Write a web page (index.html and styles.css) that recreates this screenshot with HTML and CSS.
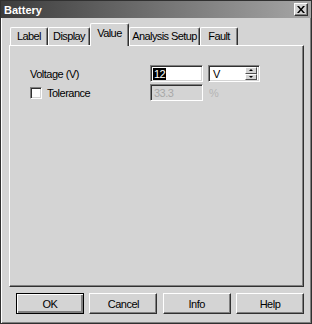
FILE: index.html
```html
<!DOCTYPE html>
<html lang="en">
<head>
  <meta charset="UTF-8" />
  <title>Battery</title>
  <link rel="stylesheet" href="styles.css">
</head>
<body>
  <div class="window">

    <!-- Title bar -->
    <div class="titlebar">
      <span class="title">Battery</span>
      <span class="close">
        <svg width="8" height="7" viewBox="0 0 8 7">
          <path d="M0 0h2l2 2.5l2-2.5h2l-3 3.5l3 3.5h-2l-2-2.5l-2 2.5h-2l3-3.5z" fill="#000"/>
        </svg>
      </span>
    </div>

    <div class="content">
      <!-- Tabs -->
      <div class="tabs">
        <div class="tab tab-label">Label</div>
        <div class="tab tab-display">Display</div>
        <div class="tab tab-value active">Value</div>
        <div class="tab tab-analysis">Analysis Setup</div>
        <div class="tab tab-fault">Fault</div>
      </div>

      <!-- Value page -->
      <div class="panel">
        <div class="row">
          <span class="label">Voltage (V)</span>
          <div class="field"><span class="selected">12</span></div>
          <div class="combo">
            <span class="combo-text">V</span>
            <div class="spin">
              <span class="spin-btn"><i class="arrow up"></i></span>
              <span class="spin-btn"><i class="arrow down"></i></span>
            </div>
          </div>
        </div>
        <div class="row">
          <label class="label check"><span class="box"></span>Tolerance</label>
          <div class="field disabled">33.3</div>
          <span class="unit">%</span>
        </div>
      </div>

      <!-- Buttons -->
      <div class="buttons">
        <div class="btn default">OK</div>
        <div class="btn">Cancel</div>
        <div class="btn">Info</div>
        <div class="btn">Help</div>
      </div>
    </div>

  </div>
</body>
</html>
```

FILE: styles.css
```css
* { margin: 0; padding: 0; box-sizing: border-box; }

body {
  background: #d4d4d4;
  font-family: 'Liberation Sans', Arial, sans-serif;
  font-size: 11px;
  letter-spacing: -0.5px;
  color: #000;
}

.window {
  width: 312px;
  height: 324px;
  background: #d4d4d4;
  border: 1px solid #303030;
  box-shadow: inset 1px 1px #ffffff, inset -1px -1px #808080;
}

/* title bar */
.titlebar {
  height: 17px;
  display: flex;
  align-items: center;
  justify-content: space-between;
  padding: 0 3px 0 3px;
  background: linear-gradient(to right, #3c3c3c, #a6a6a6);
}

.title {
  color: #fff;
  font-weight: bold;
  letter-spacing: 0;
}

.close {
  width: 14px;
  height: 13px;
  display: flex;
  align-items: center;
  justify-content: center;
  background: #d4d4d4;
  border: 1px solid;
  border-color: #fff #303030 #303030 #fff;
  box-shadow: inset -1px -1px #808080;
}

.content {
  padding: 0 7px 0 8px;
}

/* tabs */
.tabs {
  display: flex;
  height: 22px;
  margin-top: 5px;
  padding-left: 1px;
  position: relative;
  z-index: 1;
}

.tab {
  height: 18px;
  margin-top: 4px;
  padding-top: 2px;
  text-align: center;
  letter-spacing: -0.6px;
  border: 1px solid #fff;
  border-bottom: none;
  border-right: 1px solid #303030;
  border-radius: 2px 2px 0 0;
  box-shadow: inset -1px 0 #808080;
}

.tab-label { width: 38px; }
.tab-display { width: 42px; }
.tab-value { width: 39px; }
.tab-analysis { width: 71px; }
.tab-fault { width: 38px; }

.tab.active {
  height: 23px;
  margin-top: 0;
  padding-top: 3px;
  background: #d4d4d4;
}

/* page */
.panel {
  height: 242px;
  border: 1px solid;
  border-color: #fff #303030 #303030 #fff;
  box-shadow: inset -1px -1px #808080;
  padding: 19px 0 0 20px;
}

.row {
  display: flex;
  align-items: center;
  height: 17px;
  margin-bottom: 2px;
}

.label {
  width: 120px;
}

.check {
  display: flex;
  align-items: center;
}

.box {
  width: 12px;
  height: 12px;
  margin-right: 5px;
  background: #fff;
  border: 1px solid;
  border-color: #808080 #fff #fff #808080;
  box-shadow: inset 1px 1px #303030, inset -1px -1px #d4d4d4;
}

.field {
  width: 53px;
  height: 17px;
  padding: 2px 0 0 2px;
  background: #fff;
  border: 1px solid;
  border-color: #808080 #fff #fff #808080;
  box-shadow: inset 1px 1px #303030, inset -1px -1px #d4d4d4;
}

.field.disabled {
  background: #d4d4d4;
  color: #a8a8a8;
  padding-left: 3px;
}

.selected {
  display: inline-block;
  background: #000;
  color: #fff;
  line-height: 12px;
  padding: 0 1px;
}

.combo {
  width: 52px;
  height: 17px;
  margin-left: 5px;
  display: flex;
  align-items: center;
  justify-content: space-between;
  padding: 0 2px 0 4px;
  background: #fff;
  border: 1px solid;
  border-color: #808080 #fff #fff #808080;
  box-shadow: inset 1px 1px #303030, inset -1px -1px #d4d4d4;
}

.spin {
  display: flex;
  flex-direction: column;
  width: 12px;
  height: 13px;
}

.spin-btn {
  flex: 1;
  display: flex;
  align-items: center;
  justify-content: center;
  background: #d4d4d4;
  border: 1px solid;
  border-color: #fff #505050 #505050 #fff;
}

.arrow {
  width: 0;
  height: 0;
  border-left: 2px solid transparent;
  border-right: 2px solid transparent;
}

.arrow.up { border-bottom: 2px solid #000; }
.arrow.down { border-top: 2px solid #000; }

.unit {
  margin-left: 6px;
  color: #b4b4b4;
}

/* buttons */
.buttons {
  display: flex;
  justify-content: space-between;
  padding-left: 7px;
  margin-top: 6px;
}

.btn {
  width: 68px;
  height: 21px;
  display: flex;
  align-items: center;
  justify-content: center;
  border: 1px solid;
  border-color: #fff #303030 #303030 #fff;
  box-shadow: inset -1px -1px #808080;
}

.btn.default {
  border: 1px solid #000;
  box-shadow: inset 1px 1px #fff, inset -2px -2px #808080, inset -1px -1px #303030;
}
```
